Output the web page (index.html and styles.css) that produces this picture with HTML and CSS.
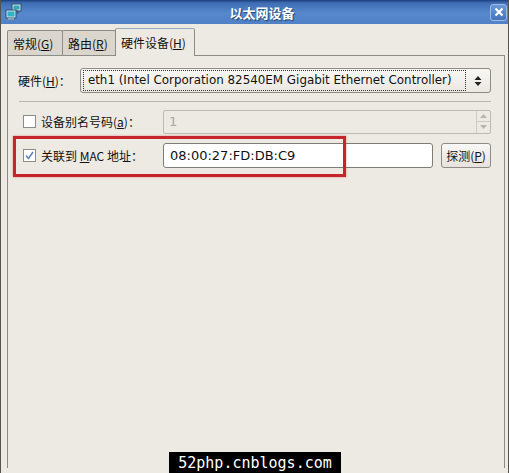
FILE: index.html
```html
<!DOCTYPE html>
<html lang="zh-CN">
<head>
    <meta charset="UTF-8">
    <title>以太网设备</title>
    <link rel="stylesheet" href="styles.css">
</head>
<body>
    <div class="window">
        <div class="titlebar">
            <svg class="app-icon" width="17" height="18" viewBox="0 0 17 18">
                <rect x="7" y="1" width="9" height="7" fill="#cfe4ee" stroke="#2c4f6a"/>
                <rect x="8.5" y="2.5" width="6" height="4" fill="#2fa7b8"/>
                <rect x="1" y="7" width="10" height="8" fill="#cfe4ee" stroke="#2c4f6a"/>
                <rect x="2.5" y="8.5" width="7" height="5" fill="#30b3c4"/>
                <rect x="3" y="15" width="6" height="2" fill="#8aa2b0"/>
                <path d="M11 8 L13 8 L13 11" stroke="#2c4f6a" fill="none"/>
            </svg>
            <span class="title">以太网设备</span>
            <span class="close">
                <svg width="10" height="10" viewBox="0 0 10 10">
                    <path d="M1.5 1.5 L8.5 8.5 M8.5 1.5 L1.5 8.5" stroke="#fff" stroke-width="2.2"/>
                </svg>
            </span>
        </div>

        <div class="content">
            <div class="tabs">
                <div class="tab">常规(<u>G</u>)</div>
                <div class="tab">路由(<u>R</u>)</div>
                <div class="tab active">硬件设备(<u>H</u>)</div>
            </div>

            <div class="panel">
                <div class="row">
                    <span class="label">硬件(<u>H</u>)：</span>
                    <div class="combo">
                        <span class="combo-text">eth1 (Intel Corporation 82540EM Gigabit Ethernet Controller)</span>
                        <svg class="combo-arrows" width="8" height="12" viewBox="0 0 8 12">
                            <path d="M0.5 5 L4 1 L7.5 5 Z M0.5 7 L4 11 L7.5 7 Z" fill="#222"/>
                        </svg>
                    </div>
                </div>

                <div class="separator"></div>

                <div class="row">
                    <span class="check"></span>
                    <span class="label check-label">设备别名号码(<u>a</u>)：</span>
                    <div class="spin">
                        <span class="spin-text">1</span>
                        <span class="spin-buttons">
                            <span class="spin-btn">
                                <svg width="7" height="4" viewBox="0 0 7 4"><path d="M0 4 L3.5 0 L7 4 Z" fill="#b8b5ae"/></svg>
                            </span>
                            <span class="spin-btn">
                                <svg width="7" height="4" viewBox="0 0 7 4"><path d="M0 0 L3.5 4 L7 0 Z" fill="#b8b5ae"/></svg>
                            </span>
                        </span>
                    </div>
                </div>

                <div class="row">
                    <span class="check checked">
                        <svg width="9" height="9" viewBox="0 0 9 9">
                            <path d="M1 4.5 L3.5 7.5 L8 1" stroke="#5d84b8" stroke-width="1.6" fill="none"/>
                        </svg>
                    </span>
                    <span class="label check-label">关联到 <u>M</u>AC 地址：</span>
                    <div class="entry">08:00:27:FD:DB:C9</div>
                    <button class="button">探测(<u>P</u>)</button>
                </div>
            </div>
        </div>

        <div class="highlight"></div>
        <div class="watermark">52php.cnblogs.com</div>
    </div>
</body>
</html>
```

FILE: styles.css
```css
body {
    margin: 0;
    background: #edeae3;
    font-family: "DejaVu Sans", "Noto Sans CJK SC", sans-serif;
    font-size: 12px;
    color: #111;
}
u {
    text-decoration: underline;
    text-underline-offset: 1px;
}
.window {
    position: relative;
    width: 509px;
    height: 473px;
    box-sizing: border-box;
    border-left: 1px solid #55534e;
    border-right: 1px solid #55534e;
    overflow: hidden;
}
.titlebar {
    height: 24px;
    display: flex;
    align-items: center;
    padding: 0 1px 0 4px;
    background: linear-gradient(#1d3f7c 0%, #3e6db4 12%, #5787cc 55%, #5080c6 100%);
}
.app-icon {
    flex: none;
}
.title {
    flex: 1;
    text-align: center;
    color: #fff;
    font-family: "Noto Sans CJK SC", sans-serif;
    font-weight: bold;
    font-size: 13px;
    text-shadow: 1px 1px 1px #22406e;
    margin-left: 12px;
}
.close {
    width: 15px;
    height: 15px;
    display: flex;
    align-items: center;
    justify-content: center;
    border: 1px solid #9fbbe4;
    border-radius: 3px;
    background: linear-gradient(#6b98d8, #4674bb);
}
.content {
    padding: 4px 3px 0 6px;
}
.tabs {
    display: flex;
    align-items: flex-end;
    height: 27px;
    position: relative;
    z-index: 1;
}
.tab {
    height: 25px;
    box-sizing: border-box;
    padding: 0 5px;
    display: flex;
    align-items: center;
    font-family: "Noto Sans CJK SC", sans-serif;
    font-size: 12px;
    background: #dad6cd;
    border: 1px solid #8d8b86;
    border-bottom: none;
    border-radius: 2px 2px 0 0;
    margin-right: -1px;
}
.tab:nth-child(1) { width: 56px; }
.tab:nth-child(2) { width: 54px; }
.tab.active {
    width: 80px;
    height: 28px;
    margin-bottom: -1px;
    background: #edeae3;
    border-top-color: #9aa8bd;
}
.panel {
    height: 400px;
    border: 1px solid #8d8b86;
    border-bottom: none;
    padding: 12px 13px 0 10px;
}
.row {
    display: flex;
    align-items: center;
    height: 25px;
}
.label {
    font-family: "Noto Sans CJK SC", sans-serif;
    font-size: 12px;
    white-space: nowrap;
}
.combo {
    flex: 1;
    height: 25px;
    box-sizing: border-box;
    margin-left: 9px;
    display: flex;
    align-items: center;
    padding: 0 8px 0 2px;
    border: 1px solid #8d8b86;
    border-radius: 3px;
    background: linear-gradient(#f8f7f4, #ebe8e2);
}
.combo-text {
    flex: 1;
    height: 19px;
    line-height: 19px;
    padding-left: 4px;
    border: 1px dotted #333;
    font-size: 11.9px;
    white-space: nowrap;
    overflow: hidden;
}
.combo-arrows {
    margin-left: 8px;
}
.separator {
    height: 1px;
    background: #b9b6ae;
    margin: 8px 0 7px 1px;
}
.check {
    flex: none;
    width: 11px;
    height: 11px;
    margin-left: 5px;
    border: 1px solid #8d8b86;
    background: #fff;
    display: flex;
    align-items: center;
    justify-content: center;
}
.check-label {
    margin-left: 5px;
    width: 122px;
}
.spin {
    flex: 1;
    height: 24px;
    box-sizing: border-box;
    display: flex;
    border: 1px solid #bdbab3;
    border-radius: 2px;
    background: #edeae3;
}
.spin-text {
    flex: 1;
    padding-left: 5px;
    line-height: 22px;
    font-size: 13px;
    color: #aaa79f;
}
.spin-buttons {
    width: 13px;
    display: flex;
    flex-direction: column;
    border-left: 1px solid #cfccc5;
}
.spin-btn {
    flex: 1;
    display: flex;
    align-items: center;
    justify-content: center;
}
.spin-btn + .spin-btn {
    border-top: 1px solid #cfccc5;
}
.row + .row {
    margin-top: 9px;
}
.entry {
    flex: 1;
    height: 25px;
    box-sizing: border-box;
    padding-left: 6px;
    line-height: 23px;
    border: 1px solid #7e7c77;
    border-radius: 3px;
    background: #fff;
    font-size: 13px;
}
.button {
    margin-left: 8px;
    width: 50px;
    height: 25px;
    padding: 0;
    border: 1px solid #8d8b86;
    border-radius: 3px;
    background: linear-gradient(#f9f8f6, #e6e3dc);
    font-family: "Noto Sans CJK SC", sans-serif;
    font-size: 12px;
    color: #111;
}
.highlight {
    position: absolute;
    left: 12px;
    top: 136px;
    width: 333px;
    height: 41px;
    box-sizing: border-box;
    border: 3px solid #c6252c;
    box-shadow: 0 0 2px rgba(198, 37, 44, 0.5);
}
.watermark {
    position: absolute;
    left: 168px;
    top: 452px;
    width: 172px;
    height: 22px;
    background: #000;
    color: #fff;
    font-family: "DejaVu Sans Mono", monospace;
    font-size: 15px;
    line-height: 22px;
    text-align: center;
}
```
